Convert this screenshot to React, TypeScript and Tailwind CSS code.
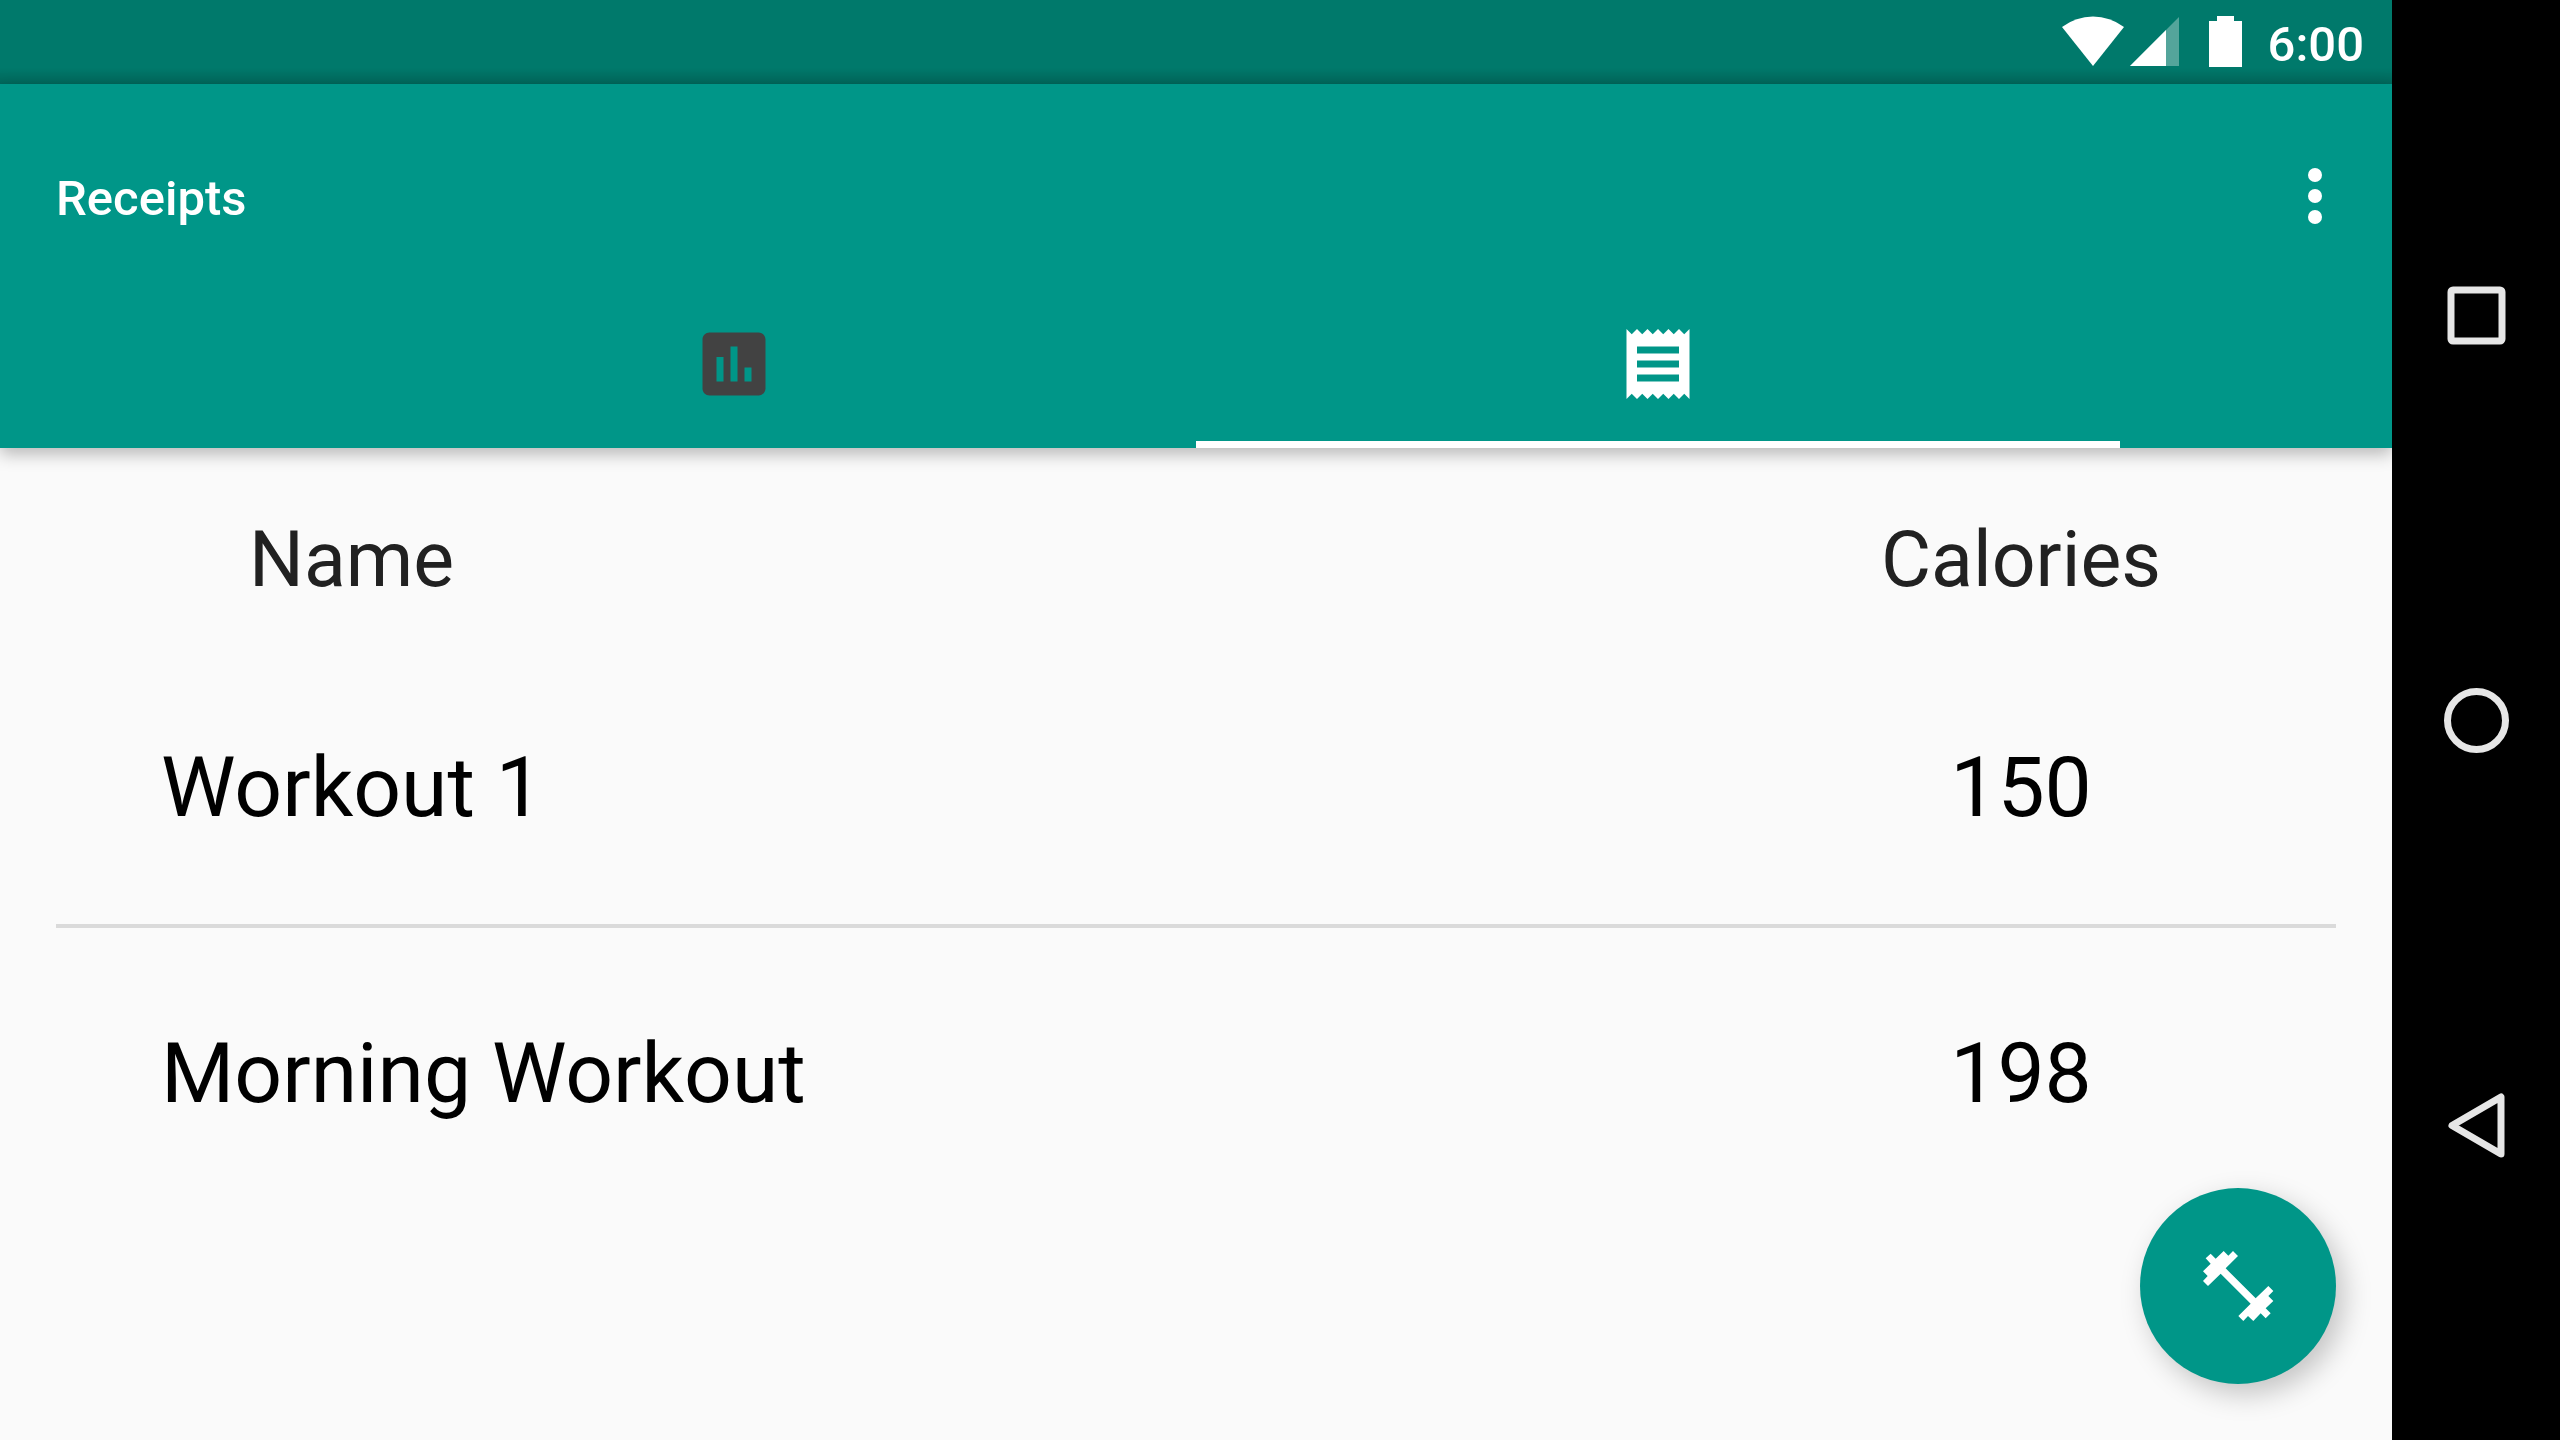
const workouts = [
  { name: "Workout 1", calories: 150 },
  { name: "Morning Workout", calories: 198 },
];

function StatusBar() {
  return (
    <div className="flex h-[84px] shrink-0 items-center justify-end bg-[#00796b] bg-linear-to-b from-transparent from-80% to-black/15 pr-7 text-white">
      <svg className="mr-1.5 h-[52px] w-[62px]" viewBox="0 1 62 52" fill="currentColor" aria-label="Wi-Fi">
        <path d="M0 12Q14 1.500 31 1.500T62 12L31 51Z" />
      </svg>
      <svg className="mr-[30px] h-[52px] w-[49px]" viewBox="0 1 49 52" fill="currentColor" aria-label="Mobile signal">
        <path d="M49 2V51H0Z" opacity="0.33" />
        <path d="M36 15V51H0Z" />
      </svg>
      <svg className="mr-[26px] h-[52px] w-[33px]" viewBox="0 1 33 52" fill="currentColor" aria-label="Battery">
        <path d="M8 1H25V6H33V52H0V6H8Z" />
      </svg>
      <span className="pt-1.5 text-[49px] leading-[56px] font-medium">6:00</span>
    </div>
  );
}

function AppHeader() {
  return (
    <header className="relative shrink-0 bg-[#009688] pt-7 text-white shadow-[0_6px_16px_rgba(0,0,0,0.27)]">
      <div className="flex h-[168px] items-center justify-between pr-[35px] pl-14">
        <h1 className="pt-1.5 text-[49px] leading-[60px] font-medium">Receipts</h1>
        <button type="button" aria-label="More options" className="h-[84px] w-[84px]">
          <svg viewBox="0 0 84 84" fill="currentColor" className="h-full w-full">
            <circle cx="42" cy="21" r="7" />
            <circle cx="42" cy="42" r="7" />
            <circle cx="42" cy="63" r="7" />
          </svg>
        </button>
      </div>
      <nav className="flex h-[168px] justify-center" role="tablist">
        <button type="button" role="tab" aria-label="Statistics" aria-selected="false" className="flex w-[924px] items-center justify-center text-[#424242]">
          <svg viewBox="0 0 24 24" fill="currentColor" className="h-[84px] w-[84px]">
            <path d="M19 3H5c-1.100 0-2 .9-2 2v14c0 1.100.9 2 2 2h14c1.100 0 2-.9 2-2V5c0-1.100-.9-2-2-2zM9 17H7v-7h2v7zm4 0h-2V7h2v10zm4 0h-2v-4h2v4z" />
          </svg>
        </button>
        <button type="button" role="tab" aria-label="Receipts" aria-selected="true" className="flex w-[924px] items-center justify-center border-b-[7px] border-white pt-[7px]">
          <svg viewBox="0 0 24 24" fill="currentColor" className="h-[84px] w-[84px]">
            <path d="M18 17H6v-2h12v2zm0-4H6v-2h12v2zm0-4H6V7h12v2zM3 22l1.500-1.500L6 22l1.500-1.500L9 22l1.500-1.500L12 22l1.500-1.500L15 22l1.500-1.500L18 22l1.500-1.500L21 22V2l-1.500 1.500L18 2l-1.500 1.500L15 2l-1.500 1.500L12 2l-1.500 1.500L9 2 7.500 3.500 6 2 4.500 3.500 3 2v20z" />
          </svg>
        </button>
      </nav>
    </header>
  );
}

function WorkoutTable() {
  return (
    <main className="flex-1 px-14">
      <table className="w-full table-fixed border-collapse">
        <thead>
          <tr className="h-[194px] text-[77px] leading-[90px] text-[#212121]">
            <th scope="col" className="pt-[30px] pl-[193px] text-left font-normal">Name</th>
            <th scope="col" className="w-[630px] pt-[30px] text-center font-normal">Calories</th>
          </tr>
        </thead>
        <tbody className="divide-y-4 divide-[#dadada]">
          {workouts.map((w) => (
            <tr key={w.name} className="h-[284px] text-[84px] leading-[98px] text-black">
              <td className="pt-2.5 pl-[105px]">{w.name}</td>
              <td className="pt-2.5 text-center">{w.calories}</td>
            </tr>
          ))}
        </tbody>
      </table>
    </main>
  );
}

function AddWorkoutButton() {
  return (
    <button
      type="button"
      aria-label="Add workout"
      className="absolute right-14 bottom-14 h-[196px] w-[196px] rounded-full bg-[#009688] text-white shadow-[8px_10px_28px_rgba(0,0,0,0.22)]"
    >
      <svg viewBox="90 84 588 588" fill="currentColor" className="h-full w-full">
        <path d="M347 325L384 288L369 273L355 287L341 273L317 296L302 281L287 295L302 311L279 334L293 348L279 363L294 378L332 341L422 431L385 468L400 483L414 468L430 483L452 460L467 475L482 460L467 445L490 423L475 408L490 393L475 378L437 415Z" />
      </svg>
    </button>
  );
}

function SystemNav() {
  const button = "flex flex-1 items-center justify-center";
  const icon = "h-[84px] w-[84px]";
  return (
    <nav aria-label="System" className="flex w-[168px] shrink-0 flex-col bg-black py-28 text-[#e6e6e6]">
      <button type="button" aria-label="Recent apps" className={button}>
        <svg viewBox="0 0 84 84" fill="none" stroke="currentColor" strokeWidth="7" className={icon}>
          <rect x="17" y="17" width="51" height="51" rx="2" />
        </svg>
      </button>
      <button type="button" aria-label="Home" className={button}>
        <svg viewBox="0 0 84 84" fill="none" stroke="currentColor" strokeWidth="7" className={icon}>
          <circle cx="42.500" cy="42.500" r="29" />
        </svg>
      </button>
      <button type="button" aria-label="Back" className={button}>
        <svg viewBox="0 0 84 84" fill="none" stroke="currentColor" strokeWidth="7" strokeLinejoin="round" className={icon}>
          <path d="M18 42.500L67 14V71Z" />
        </svg>
      </button>
    </nav>
  );
}

export default function App() {
  return (
    <div className="flex min-h-screen bg-black font-[Roboto,sans-serif]">
      <div className="relative flex min-w-0 flex-1 flex-col bg-[#fafafa]">
        <StatusBar />
        <AppHeader />
        <WorkoutTable />
        <AddWorkoutButton />
      </div>
      <SystemNav />
    </div>
  );
}
